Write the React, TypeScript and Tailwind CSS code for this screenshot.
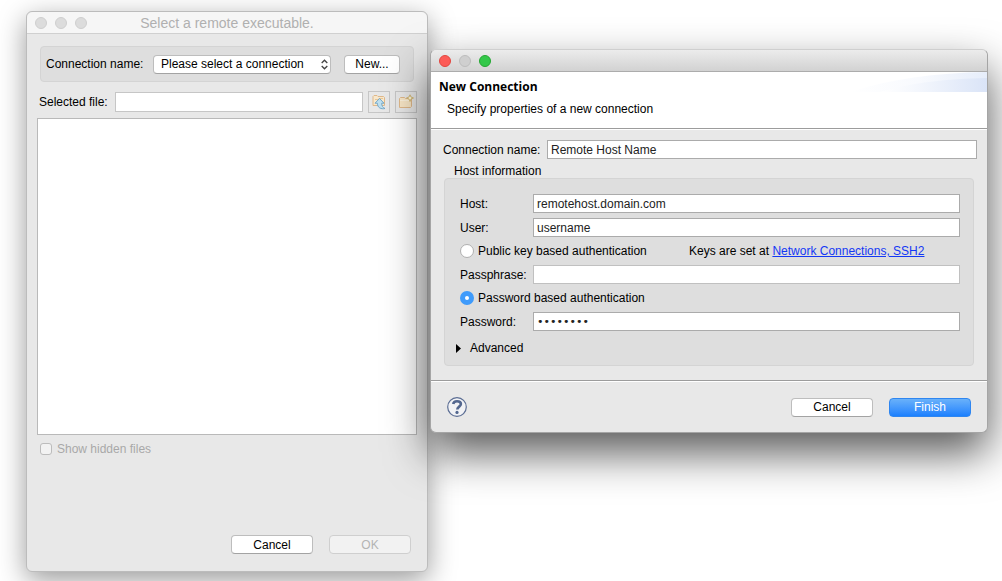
import { useState } from 'react';
import type { ButtonHTMLAttributes, InputHTMLAttributes, ReactNode } from 'react';

// Plain white push button
const PushButton = ({ className = '', ...props }: ButtonHTMLAttributes<HTMLButtonElement>) => (
  <button
    type="button"
    className={`h-[19px] rounded border border-[#bdbdbd] border-b-[#a3a3a3] bg-white text-center leading-4 disabled:border-[#cfcfcf] disabled:bg-[#f2f2f2] disabled:text-[#b4b4b4] ${className}`}
    {...props}
  />
);

// Square-cornered text box
const TextBox = ({ className = '', ...props }: InputHTMLAttributes<HTMLInputElement>) => (
  <input
    className={`h-[19px] w-full min-w-0 flex-1 border border-[#ababab] bg-white px-[3px] text-[#222] outline-none disabled:border-[#c0c0c0] ${className}`}
    {...props}
  />
);

const FieldRow = ({ id, label, children }: { id: string; label: string; children: ReactNode }) => (
  <div className="flex items-center">
    <label htmlFor={id} className="w-[73px]">{label}</label>
    {children}
  </div>
);

const radioClass =
  'size-[14px] appearance-none rounded-full border border-[#b0b0b0] bg-white checked:border-[5px] checked:border-[#3f9bfb]';

// Wider bullets for the masked fields
const maskedClass = "font-['DejaVu_Sans',sans-serif] text-[11px]";

const FolderUpIcon = () => (
  <svg width="16" height="16" viewBox="0 0 16 16" fill="none">
    <path d="M2 11.500V2.500l1-1h3l1 1h5.500l1 1v8z" fill="#f8e8cc" stroke="#dfb88a" strokeLinejoin="round" />
    <path d="M4 5.500h3l1-1h4" stroke="#e6c698" />
    <path d="M8.500 4.500L13 9.200h-2.300c0 2.600.9 4.300 3.300 5.300-3.800.9-7.600-.6-7.600-5.300H4z" fill="#bfe0f0" stroke="#76a9c9" strokeLinejoin="round" />
  </svg>
);

const NewFolderIcon = () => (
  <svg width="16" height="16" viewBox="0 0 16 16" fill="none">
    <path d="M1.500 13.500v-9l1-1h4l1 1h6v8l-1 1z" fill="#f8e6c6" stroke="#dfb88a" strokeLinejoin="round" />
    <path d="M2 6.500h11" stroke="#fbf1dc" />
    <path d="M12 .8l1 2.200 2.500 1-2.500 1-1 2.500-1-2.500-2.500-1 2.500-1z" fill="#fdf6d4" stroke="#cfb26e" strokeWidth=".9" />
  </svg>
);

const HelpIcon = () => (
  <svg width="20" height="20" viewBox="0 0 20 20" fill="none">
    <circle cx="10" cy="10" r="9.300" fill="#f1f2f5" stroke="#5c6e94" strokeWidth="1.200" />
    <path d="M6.200 7c.3-1.900 1.800-2.800 3.800-2.800 2.300 0 3.900 1.100 3.900 2.900 0 2.500-3.600 2.600-3.600 5.400" stroke="#53678f" strokeWidth="2.600" />
    <circle cx="10" cy="15.400" r="1.600" fill="#53678f" />
  </svg>
);

// Pale blue sweep in the corner of the wizard banner
const BannerSweep = () => (
  <svg width="137" height="20" viewBox="0 0 137 20">
    <defs>
      <linearGradient id="sweep">
        <stop offset="0" stopColor="#fff" />
        <stop offset=".35" stopColor="#f4f7fd" />
        <stop offset="1" stopColor="#dae4f7" />
      </linearGradient>
      <linearGradient id="sweepTop">
        <stop offset="0" stopColor="#fff" />
        <stop offset=".5" stopColor="#f8fafe" />
        <stop offset="1" stopColor="#e6edfa" />
      </linearGradient>
    </defs>
    <path d="M0 20C40 7 85 1 137 0v20z" fill="url(#sweepTop)" />
    <path d="M30 20C65 10 95 7 137 6v14z" fill="url(#sweep)" />
  </svg>
);

const SelectExecutableWindow = () => (
  <section className="flex w-[402px] shrink-0 flex-col rounded-md border border-[#bcbcbc] bg-[#e8e8e8] shadow-[0_8px_28px_rgba(0,0,0,0.4)]">
    <header className="flex h-[22px] items-center rounded-t-md border-b border-[#d0d0d0] bg-[#f6f6f6] px-2">
      <div className="flex w-[60px] gap-2">
        <span className="size-3 rounded-full border border-[#cfcfcf] bg-[#dcdcdc]" />
        <span className="size-3 rounded-full border border-[#cfcfcf] bg-[#dcdcdc]" />
        <span className="size-3 rounded-full border border-[#cfcfcf] bg-[#dcdcdc]" />
      </div>
      <h1 className="flex-1 pr-[60px] text-center text-[14px] leading-5 text-[#b0b0b0]">Select a remote executable.</h1>
    </header>

    <div className="flex flex-1 flex-col px-[10px] pt-3 pb-[17px]">
      <div className="mx-[3px] flex h-9 items-center rounded border border-[#d4d4d4] bg-[#dedede] px-[5px]">
        <label htmlFor="connection" className="w-[107px]">Connection name:</label>
        <div className="relative mr-[13px] w-[178px]">
          <select
            id="connection"
            className="block h-[19px] w-full appearance-none rounded border border-[#bdbdbd] border-b-[#a3a3a3] bg-white pr-5 pl-[7px] leading-4"
          >
            <option>Please select a connection</option>
          </select>
          <svg className="pointer-events-none absolute top-1 right-[3px]" width="7" height="11" viewBox="0 0 7 11" fill="none" stroke="#444" strokeWidth="1.300">
            <path d="M.7 4L3.500 1.200 6.300 4M.7 7l2.800 2.800L6.300 7" />
          </svg>
        </div>
        <PushButton className="w-14">New...</PushButton>
      </div>

      <div className="mt-[9px] mb-[5px] flex items-center gap-[5px]">
        <label htmlFor="file" className="w-[71px] ml-[2px]">Selected file:</label>
        <input id="file" className="h-5 min-w-0 flex-1 border border-[#c6c6c6] bg-white px-[3px] outline-none" />
        <button type="button" disabled aria-label="Up one level" className="flex size-[22px] items-center justify-center border border-[#c6c6c6]">
          <FolderUpIcon />
        </button>
        <button type="button" disabled aria-label="New folder" className="flex size-[22px] items-center justify-center border border-[#c6c6c6]">
          <NewFolderIcon />
        </button>
      </div>

      <div role="listbox" aria-label="Files" className="flex-1 border border-[#b9b9b9] bg-white" />

      <label className="mt-[6px] ml-[3px] flex items-center gap-[5px] text-[#a8a8a8]">
        <input type="checkbox" disabled className="size-3 appearance-none rounded-[3px] border border-[#bcbcbc] bg-[#f2f2f2]" />
        Show hidden files
      </label>

      <div className="mt-[78px] flex justify-end gap-4 pr-[6px]">
        <PushButton className="w-[82px]">Cancel</PushButton>
        <PushButton className="w-[82px]" disabled>OK</PushButton>
      </div>
    </div>
  </section>
);

const NewConnectionWindow = () => {
  const [auth, setAuth] = useState('password');

  return (
    <section className="relative mt-[38px] flex min-w-0 flex-1 flex-col self-start rounded-md border border-[#a5a5a5] border-t-[#cfcfcf] bg-[#e8e8e8] shadow-[0_20px_44px_rgba(0,0,0,0.65)]">
      <header className="flex h-[22px] items-center gap-2 rounded-t-md border-b border-[#acacac] bg-linear-to-b from-[#ececec] to-[#d2d2d2] px-2">
        <span className="size-3 rounded-full border border-[#e2463f] bg-[#fc5b57]" />
        <span className="size-3 rounded-full border border-[#bdbdbd] bg-[#cfcfcf]" />
        <span className="size-3 rounded-full border border-[#24a732] bg-[#34c84a]" />
      </header>

      <div className="flex h-[57px] justify-between border-b border-[#9c9c9c] bg-white pl-2">
        <div className="pt-[7px]">
          <h2 className="font-['Open_Sans',sans-serif] text-[12px] leading-4 font-bold">New Connection</h2>
          <p className="mt-[6px] pl-2">Specify properties of a new connection</p>
        </div>
        <BannerSweep />
      </div>

      <div className="border-t border-b border-t-white border-b-[#9c9c9c] px-3 pt-[10px] pb-[14px]">
        <div className="-mr-[2px] flex items-center">
          <label htmlFor="name" className="w-[104px]">Connection name:</label>
          <TextBox id="name" defaultValue="Remote Host Name" />
        </div>
        <fieldset>
          <legend className="h-[19px] pt-1 pl-[11px] leading-4">Host information</legend>
          <div className="mx-px flex flex-col gap-[5px] rounded border border-[#d4d4d4] bg-[#dedede] pt-[15px] pr-[13px] pb-[9px] pl-[15px]">
            <FieldRow id="host" label="Host:">
              <TextBox id="host" defaultValue="remotehost.domain.com" />
            </FieldRow>
            <FieldRow id="user" label="User:">
              <TextBox id="user" defaultValue="username" />
            </FieldRow>
            <div className="flex h-[18px] items-center">
              <label className="flex w-[229px] items-center gap-1">
                <input type="radio" name="auth" className={radioClass} checked={auth === 'key'} onChange={() => setAuth('key')} />
                Public key based authentication
              </label>
              <p>
                Keys are set at{' '}
                <a href="#ssh2" className="text-[#1438f5] underline">Network Connections, SSH2</a>
              </p>
            </div>
            <FieldRow id="passphrase" label="Passphrase:">
              <TextBox id="passphrase" type="password" className={maskedClass} disabled={auth !== 'key'} />
            </FieldRow>
            <label className="flex h-[18px] items-center gap-1">
              <input type="radio" name="auth" className={radioClass} checked={auth === 'password'} onChange={() => setAuth('password')} />
              Password based authentication
            </label>
            <FieldRow id="password" label="Password:">
              <TextBox id="password" type="password" className={maskedClass} defaultValue="password" disabled={auth !== 'password'} />
            </FieldRow>
            <button type="button" className="mt-1 -ml-1 flex h-4 items-center gap-[9px] self-start">
              <svg width="5" height="9" viewBox="0 0 5 9">
                <path d="M0 0l5 4.500L0 9z" />
              </svg>
              Advanced
            </button>
          </div>
        </fieldset>
      </div>

      <footer className="flex h-[51px] items-center gap-4 rounded-b-md border-t border-white px-4">
        <button type="button" aria-label="Help" className="mr-auto">
          <HelpIcon />
        </button>
        <PushButton className="w-[82px]">Cancel</PushButton>
        <button type="button" className="h-[19px] w-[82px] rounded border border-[#2f86f0] bg-linear-to-b from-[#69b1fa] to-[#1a80fe] leading-4 text-white">
          Finish
        </button>
      </footer>
    </section>
  );
};

const App = () => (
  <main className="flex min-h-screen gap-[2px] overflow-hidden bg-white pt-[11px] pr-[14px] pb-[9px] pl-[26px] font-['Liberation_Sans',Arial,sans-serif] text-[12px] leading-4 text-black">
    <SelectExecutableWindow />
    <NewConnectionWindow />
  </main>
);

export default App;
